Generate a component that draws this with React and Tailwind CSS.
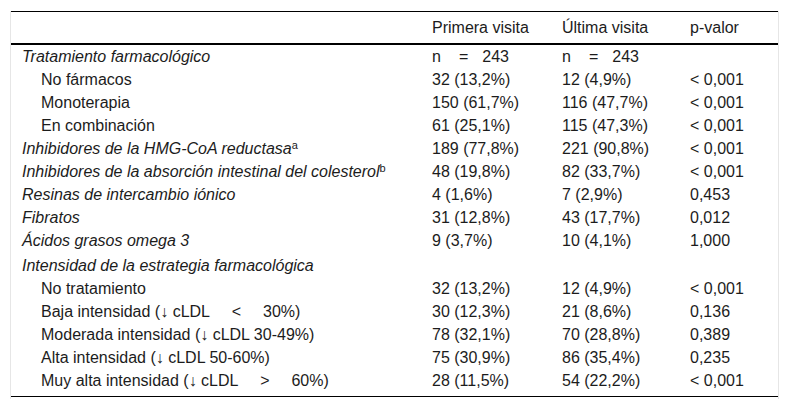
const rows = [
  { label: 'Tratamiento farmacológico', italic: true, a: 'n', b: 'n', p: '', spaced: true },
  { label: 'No fármacos', indent: true, a: '32 (13,2%)', b: '12 (4,9%)', p: '< 0,001' },
  { label: 'Monoterapia', indent: true, a: '150 (61,7%)', b: '116 (47,7%)', p: '< 0,001' },
  { label: 'En combinación', indent: true, a: '61 (25,1%)', b: '115 (47,3%)', p: '< 0,001' },
  { label: 'Inhibidores de la HMG-CoA reductasa', sup: 'a', italic: true, a: '189 (77,8%)', b: '221 (90,8%)', p: '< 0,001' },
  { label: 'Inhibidores de la absorción intestinal del colesterol', sup: 'b', italic: true, a: '48 (19,8%)', b: '82 (33,7%)', p: '< 0,001' },
  { label: 'Resinas de intercambio iónico', italic: true, a: '4 (1,6%)', b: '7 (2,9%)', p: '0,453' },
  { label: 'Fibratos', italic: true, a: '31 (12,8%)', b: '43 (17,7%)', p: '0,012' },
  { label: 'Ácidos grasos omega 3', italic: true, a: '9 (3,7%)', b: '10 (4,1%)', p: '1,000' },
  { label: 'Intensidad de la estrategia farmacológica', italic: true, a: '', b: '', p: '', section: true },
  { label: 'No tratamiento', indent: true, a: '32 (13,2%)', b: '12 (4,9%)', p: '< 0,001' },
  { label: 'Baja intensidad (↓ cLDL', op: '<', pct: '30%)', indent: true, a: '30 (12,3%)', b: '21 (8,6%)', p: '0,136' },
  { label: 'Moderada intensidad (↓ cLDL 30-49%)', indent: true, a: '78 (32,1%)', b: '70 (28,8%)', p: '0,389' },
  { label: 'Alta intensidad (↓ cLDL 50-60%)', indent: true, a: '75 (30,9%)', b: '86 (35,4%)', p: '0,235' },
  { label: 'Muy alta intensidad (↓ cLDL', op: '>', pct: '60%)', indent: true, a: '28 (11,5%)', b: '54 (22,2%)', p: '< 0,001', last: true },
];

const Count = () => (
  <span>
    n<span className="ml-[18px]">=</span>
    <span className="ml-[14px]">243</span>
  </span>
);

export default function App() {
  return (
    <div className="w-[789px] h-[409px] bg-white font-['Liberation_Sans',Arial,sans-serif] text-[16px] text-[#1c1c1c] pt-[11px]">
      <div className="ml-[10px] w-[769px] border-x border-[#e6e6e6] pb-[2px]">
        <div className="border-t border-black">
          {/* header */}
          <div className="grid grid-cols-[421px_130px_128px_1fr] h-[33px] items-center border-b-2 border-black">
            <div />
            <div>Primera visita</div>
            <div>Última visita</div>
            <div>p-valor</div>
          </div>
          <div className="border-b border-black">
            {rows.map((r, i) => (
              <div
                key={i}
                className={`grid grid-cols-[421px_130px_128px_1fr] items-center ${r.section ? 'h-[25px] pt-[2px]' : r.last ? 'h-[27px] pb-[4px]' : 'h-[23px]'}`}
              >
                <div className={`${r.indent ? 'pl-[30px]' : 'pl-[11px]'} ${r.italic ? 'italic' : ''} whitespace-nowrap`}>
                  {r.label}
                  {r.op && (
                    <>
                      <span className="inline-block w-[53px] text-center">{r.op}</span>
                      {r.pct}
                    </>
                  )}
                  {r.sup && <sup className="not-italic text-[11px]">{r.sup}</sup>}
                </div>
                <div>{r.spaced ? <Count /> : r.a}</div>
                <div>{r.spaced ? <Count /> : r.b}</div>
                <div>{r.p}</div>
              </div>
            ))}
          </div>
        </div>
      </div>
    </div>
  );
}
